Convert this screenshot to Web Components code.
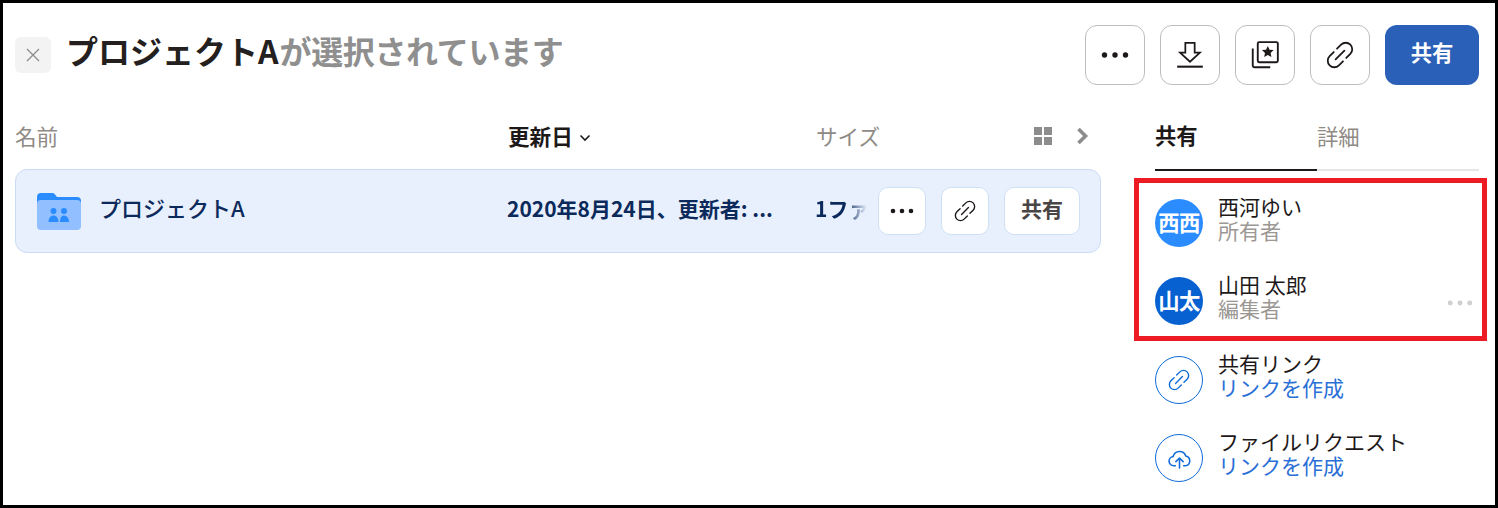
<!DOCTYPE html>
<html lang="ja">
<head>
<meta charset="utf-8">
<title>プロジェクトA</title>
<style>
  html, body { margin: 0; background: #fff; }
  body { font-family: "Noto Sans CJK JP", "Noto Sans", sans-serif; }
</style>
</head>
<body>
<selection-view></selection-view>

<script>
const ICONS = {
  dots: '<svg viewBox="0 0 24 24" fill="currentColor"><circle cx="3" cy="12" r="2.300"/><circle cx="12" cy="12" r="2.300"/><circle cx="21" cy="12" r="2.300"/></svg>',
  download: '<svg viewBox="0 0 24 24" fill="none" stroke="currentColor" stroke-width="1.5"><path d="M8 1.500h8v8.500h4.500L12 17.800 3.500 10H8z"/><path d="M1 22h22" stroke-width="1.8"/></svg>',
  collection: '<svg viewBox="0 0 24 24" fill="none" stroke="currentColor" stroke-width="1.6"><rect x="5.800" y="1" width="17.200" height="17.200" rx="1.200"/><path d="M1.500 6.500v14.200c0 1 .8 1.800 1.800 1.800h13.200"/><path fill="currentColor" stroke="none" d="M14.400 4.200l1.500 3.200 3.500.4-2.600 2.400.7 3.500-3.100-1.700-3.100 1.700.7-3.500-2.600-2.400 3.500-.4z"/></svg>',
  link: '<svg viewBox="3 3 18 18" fill="none" stroke="currentColor" stroke-width="1.150" stroke-linecap="round"><g transform="rotate(-45 12 12)"><path d="M10.500 7.800H6.800a4.200 4.200 0 0 0 0 8.400h3.700"/><path d="M13.500 7.800h3.700a4.200 4.200 0 0 1 0 8.400h-3.700"/><path d="M8 12h8"/></g></svg>',
  cloud: '<svg viewBox="0 0 24 24" fill="none" stroke="currentColor" stroke-width="1.500" stroke-linecap="round" stroke-linejoin="round"><path d="M8 19H6.500a4.500 4.500 0 0 1-.6-8.960A6.300 6.300 0 0 1 18 9.700a4.700 4.700 0 0 1-.5 9.300H16"/><path d="M12 21v-9M8.500 15l3.500-3.500 3.500 3.500"/></svg>',
  close: '<svg viewBox="0 0 16 16" fill="none" stroke="currentColor" stroke-width="1.300"><path d="M2 2l12 12M14 2L2 14"/></svg>',
  grid: '<svg viewBox="0 0 18 18" fill="currentColor"><rect width="8" height="8"/><rect x="10" width="8" height="8"/><rect y="10" width="8" height="8"/><rect x="10" y="10" width="8" height="8"/></svg>',
  chevronRight: '<svg viewBox="0 0 14 18" fill="none" stroke="currentColor" stroke-width="3.600"><path d="M2.500 2l7 7-7 7"/></svg>',
  chevronDown: '<svg viewBox="0 0 12 8" fill="none" stroke="currentColor" stroke-width="1.600"><path d="M1.500 1.500L6 6l4.500-4.500"/></svg>',
  folder: '<svg viewBox="0 0 44 37" width="44" height="37"><path fill="#2a8cff" d="M0 4a4 4 0 0 1 4-4h11c1.500 0 2.400.6 3.300 1.700L20 4h20a4 4 0 0 1 4 4v10H0z"/><rect y="7" width="44" height="30" rx="4" fill="#91bfff"/><g fill="#2a8cff"><circle cx="16.500" cy="18" r="3"/><circle cx="27" cy="18" r="3"/><path d="M11.500 29c0-4 2.200-6.500 5-6.500s5 2.500 5 6.500z"/><path d="M23 29c0-4 1.500-6.500 4-6.500s5 2.500 5 6.500z"/></g></svg>',
};

class IconButton extends HTMLElement {
  connectedCallback() {
    if (this.shadowRoot) return;
    const shadow = this.attachShadow({ mode: 'open' });
    shadow.innerHTML = `
      <style>
        :host {
          display: flex; align-items: center; justify-content: center;
          box-sizing: border-box; flex-shrink: 0;
          width: var(--btn-w, 60px); height: var(--btn-h, 60px);
          background: var(--btn-bg, #fff);
          border: 1px solid var(--btn-border, #bdbdbd);
          border-radius: var(--btn-r, 12px);
          color: #1e1919;
        }
        svg { display: block; width: var(--icon, 28px); height: var(--icon, 28px); }
      </style>
      ${ICONS[this.getAttribute('icon')]}`;
  }
}
customElements.define('icon-button', IconButton);

class PageHeader extends HTMLElement {
  connectedCallback() {
    if (this.shadowRoot) return;
    const shadow = this.attachShadow({ mode: 'open' });
    shadow.innerHTML = `
      <style>
        :host { display: flex; align-items: center; height: 60px; }
        .close {
          width: 36px; height: 36px; border-radius: 6px; background: #f3f3f3; color: #8c8c8c;
          display: flex; align-items: center; justify-content: center;
        }
        .close svg { width: 16px; height: 16px; display: block; }
        h1 {
          margin: 0 0 10px 15px; flex: 1;
          font-size: 32px; font-weight: 700; line-height: 40px; color: #8f8f8f;
          white-space: nowrap;
        }
        h1 b { color: #242020; font-weight: 700; }
        h1 span { margin-left: 1px; letter-spacing: -0.350px; }
        .actions { display: flex; gap: 15px; }
        .primary {
          box-sizing: border-box; padding-bottom: 7px;
          width: 94px; height: 60px; border-radius: 12px; background: #2a60b8; color: #fff;
          display: flex; align-items: center; justify-content: center;
          font-size: 21.330px; font-weight: 700;
        }
      </style>
      <div class="close">${ICONS.close}</div>
      <h1><b>プロジェクトA</b><span>が選択されています</span></h1>
      <div class="actions">
        <icon-button icon="dots"></icon-button>
        <icon-button icon="download"></icon-button>
        <icon-button icon="collection"></icon-button>
        <icon-button icon="link"></icon-button>
        <div class="primary">共有</div>
      </div>`;
  }
}
customElements.define('page-header', PageHeader);

class FileRow extends HTMLElement {
  connectedCallback() {
    if (this.shadowRoot) return;
    const shadow = this.attachShadow({ mode: 'open' });
    shadow.innerHTML = `
      <style>
        :host {
          display: grid; grid-template-columns: 491px 308px 1fr; align-items: center;
          box-sizing: border-box; height: 84px;
          background: #e8f0fd; border: 1px solid #c9dcf3; border-radius: 12px;
          font-size: 21px; font-weight: 500; color: #0b2a5b;
        }
        .name { display: flex; align-items: center; gap: 18px; padding-left: 21px; }
        .name svg { display: block; }
        .name span { font-size: 22px; padding-bottom: 9px; }
        .date, .size { padding-bottom: 7px; }
        .date { font-weight: 700; white-space: nowrap; overflow: hidden; }
        .end { display: flex; align-items: center; }
        .size {
          width: 52px; overflow: hidden; white-space: nowrap; font-weight: 700;
          -webkit-mask-image: linear-gradient(to right, #000 58%, transparent 100%);
          mask-image: linear-gradient(to right, #000 58%, transparent 100%);
        }
        .acts {
          display: flex; gap: 15px; margin-left: 11px;
          --btn-w: 48px; --btn-h: 48px; --btn-r: 10px; --btn-border: #cfe0f5; --icon: 24px;
        }
        .link { --icon: 22px; }
        .share {
          box-sizing: border-box; width: 76px; height: 48px; background: #fff; padding-bottom: 7px;
          border: 1px solid #cfe0f5; border-radius: 10px; color: #4a4545; font-weight: 700;
          display: flex; align-items: center; justify-content: center;
        }
      </style>
      <div class="name">${ICONS.folder}<span>プロジェクトA</span></div>
      <div class="date">2020年8月24日、更新者: ...</div>
      <div class="end">
        <div class="size">1ファイル</div>
        <div class="acts">
          <icon-button icon="dots"></icon-button>
          <icon-button class="link" icon="link"></icon-button>
          <div class="share">共有</div>
        </div>
      </div>`;
  }
}
customElements.define('file-row', FileRow);

class FileTable extends HTMLElement {
  connectedCallback() {
    if (this.shadowRoot) return;
    const shadow = this.attachShadow({ mode: 'open' });
    shadow.innerHTML = `
      <style>
        :host { display: block; width: 1086px; flex-shrink: 0; }
        .head {
          display: grid; grid-template-columns: 493px 308px 1fr; align-items: center;
          height: 64px; font-size: 21.600px; color: #8f8a85;
        }
        .head > div { padding-bottom: 4px; }
        .sort { display: flex; align-items: center; gap: 6px; color: #1e1919; font-weight: 700; }
        .sort svg { width: 12px; height: 8px; margin-top: 6px; display: block; }
        .size { display: flex; align-items: center; justify-content: space-between; padding-right: 11px; }
        .tools { display: flex; align-items: center; gap: 24px; color: #8c8c8c; margin-top: 2px; }
        .tools svg { display: block; }
        .grid { width: 18px; height: 18px; }
        .chev { width: 14px; height: 18px; }
      </style>
      <div class="head">
        <div>名前</div>
        <div class="sort">更新日${ICONS.chevronDown}</div>
        <div class="size">
          <span>サイズ</span>
          <span class="tools">
            <span class="grid">${ICONS.grid}</span>
            <span class="chev">${ICONS.chevronRight}</span>
          </span>
        </div>
      </div>
      <slot></slot>`;
  }
}
customElements.define('file-table', FileTable);

class ShareRow extends HTMLElement {
  connectedCallback() {
    if (this.shadowRoot) return;
    const shadow = this.attachShadow({ mode: 'open' });
    const icon = this.getAttribute('icon');
    const color = this.getAttribute('color');
    const glyph = icon
      ? `<div class="avatar outline ${icon}">${ICONS[icon]}</div>`
      : `<div class="avatar" style="background:${color}">${this.getAttribute('initials')}</div>`;
    shadow.innerHTML = `
      <style>
        :host { display: flex; align-items: center; gap: 15px; height: 48px; font-size: 21px; }
        .avatar {
          box-sizing: border-box; width: 48px; height: 48px; border-radius: 50%; flex-shrink: 0; padding-bottom: 4px;
          display: flex; align-items: center; justify-content: center;
          color: #fff; font-weight: 700; font-size: 21.330px; letter-spacing: -0.500px; white-space: nowrap;
        }
        .outline { border: 1px solid #0f6bd8; color: #0f6bd8; padding: 0; }
        .outline svg { width: 22px; height: 22px; display: block; }
        .outline.cloud svg { width: 25px; height: 25px; }
        .text { flex: 1; line-height: 24px; margin-top: -10px; white-space: nowrap; color: #1e1919; }
        .sub { color: var(--sub, #9b9793); }
        .more { width: 26px; color: #cfcfcf; margin-top: 4px; }
        .more svg { display: block; width: 26px; height: 26px; }
      </style>
      ${glyph}
      <div class="text">
        <div>${this.getAttribute('title-text')}</div>
        <div class="sub">${this.getAttribute('sub')}</div>
      </div>
      ${this.hasAttribute('more') ? `<div class="more">${ICONS.dots}</div>` : ''}`;
  }
}
customElements.define('share-row', ShareRow);

class SidePanel extends HTMLElement {
  connectedCallback() {
    if (this.shadowRoot) return;
    const shadow = this.attachShadow({ mode: 'open' });
    shadow.innerHTML = `
      <style>
        :host { display: block; width: 324px; flex-shrink: 0; }
        .tabs { display: flex; height: 66px; box-sizing: border-box; border-bottom: 2px solid #e6e6e6; font-size: 21.330px; }
        .tab { width: 162px; box-sizing: border-box; height: 66px; display: flex; align-items: center; padding-bottom: 5px; color: #8f8a85; }
        .tab.on { color: #1e1919; font-weight: 700; border-bottom: 2px solid #1e1919; }
        .marked {
          display: flex; flex-direction: column; gap: 30px;
          margin: 7px -8px 15px -21px; padding: 16px 9px 11px 16px;
          border: 5px solid #ed1c24;
        }
        .rest { display: flex; flex-direction: column; gap: 30px; --sub: #2a6fd6; }
      </style>
      <div class="tabs">
        <div class="tab on">共有</div>
        <div class="tab">詳細</div>
      </div>
      <div class="marked"><slot name="people"></slot></div>
      <div class="rest"><slot name="links"></slot></div>`;
  }
}
customElements.define('side-panel', SidePanel);

class SelectionView extends HTMLElement {
  connectedCallback() {
    if (this.shadowRoot) return;
    const shadow = this.attachShadow({ mode: 'open' });
    shadow.innerHTML = `
      <style>
        :host {
          display: block; box-sizing: border-box; width: 1498px; height: 508px; overflow: hidden;
          border: 3px solid #000;
          padding: 22px 16px 0 12px; background: #fff;
          font-family: "Noto Sans CJK JP", "Noto Sans", sans-serif;
        }
        .body { display: flex; gap: 54px; margin-top: 20px; }
        .people, .links { display: contents; }
      </style>
      <page-header></page-header>
      <div class="body">
        <file-table><file-row></file-row></file-table>
        <side-panel>
          <div class="people" slot="people">
            <share-row initials="西西" color="#2a8cff" title-text="西河ゆい" sub="所有者"></share-row>
            <share-row initials="山太" color="#0761d0" title-text="山田 太郎" sub="編集者" more></share-row>
          </div>
          <div class="links" slot="links">
            <share-row icon="link" title-text="共有リンク" sub="リンクを作成"></share-row>
            <share-row icon="cloud" title-text="ファイルリクエスト" sub="リンクを作成"></share-row>
          </div>
        </side-panel>
      </div>`;
  }
}
customElements.define('selection-view', SelectionView);
</script>
</body>
</html>
